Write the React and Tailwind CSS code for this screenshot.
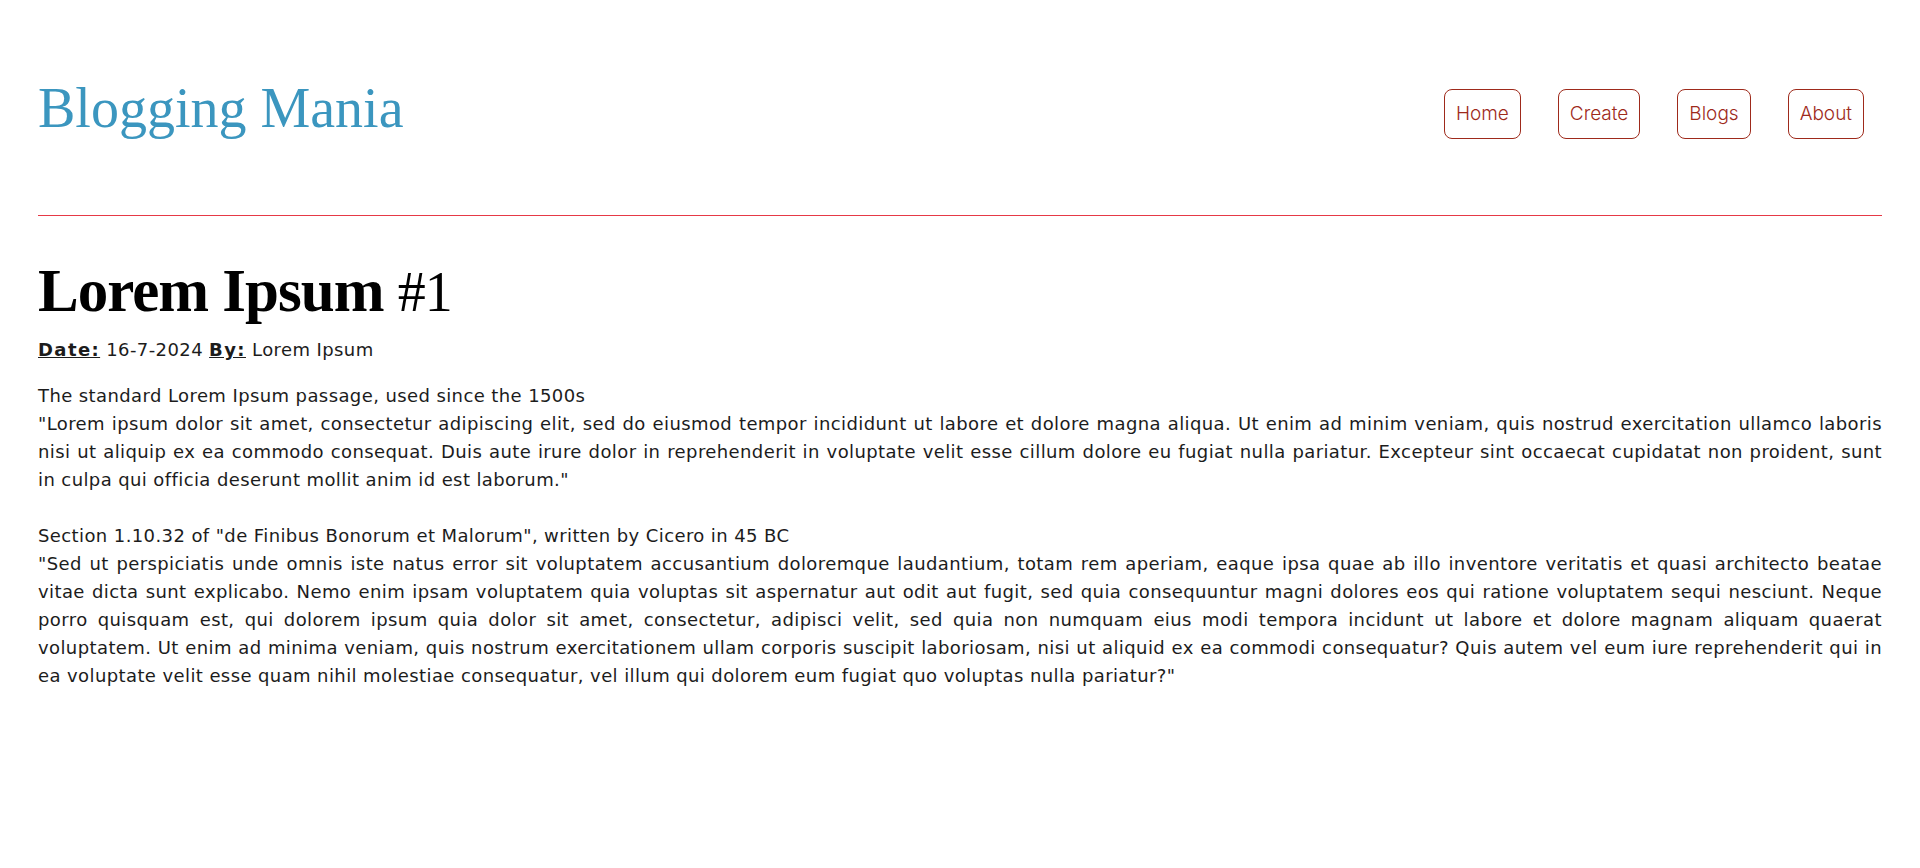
import React from 'react'

const navLinks = ['Home', 'Create', 'Blogs', 'About']

const BlogPage = () => {
  return (
    <div className="min-h-screen bg-white px-[38px]">
      {/* Header */}
      <header className="flex items-start justify-between pt-[77px]">
        <h1 className="text-[56px] leading-[62px] text-[#3b96bf] font-normal font-['Liberation_Serif',serif]">
          Blogging Mania
        </h1>
        <nav className="mt-[12px] mr-[18px] flex items-center gap-[37px]">
          {navLinks.map(link => (
            <a
              key={link}
              href="#"
              className="rounded-lg border border-[#9e2a1b] px-[11px] py-[12px] text-[19px] leading-[24px] font-light text-[#9e2a1b] font-['Inter',sans-serif]"
            >
              {link}
            </a>
          ))}
        </nav>
      </header>

      <hr className="mt-[76px] border-0 border-t border-[#e63946]" />

      {/* Post */}
      <article className="text-[18px] leading-[28px] tracking-[0.4px] text-[#1c1c1c] font-['DejaVu_Sans',sans-serif]">
        <h2 className="mt-[40px] text-[61px] leading-[69px] tracking-[-1px] font-bold text-black font-['Liberation_Serif',serif]">
          Lorem Ipsum <span className="font-normal text-[56px]">#1</span>
        </h2>
        <p className="mt-[9px]">
          <b className="underline tracking-[1.4px]">Date:</b> 16-7-2024 <b className="underline tracking-[1.4px]">By:</b> Lorem Ipsum
        </p>

        <div className="mt-[18px] text-justify">
          <p>The standard Lorem Ipsum passage, used since the 1500s</p>
          <p>
            "Lorem ipsum dolor sit amet, consectetur adipiscing elit, sed do eiusmod tempor incididunt ut labore et dolore magna aliqua. Ut enim ad minim veniam, quis nostrud exercitation ullamco laboris nisi ut aliquip ex ea commodo consequat. Duis aute irure dolor in reprehenderit in voluptate velit esse cillum dolore eu fugiat nulla pariatur. Excepteur sint occaecat cupidatat non proident, sunt in culpa qui officia deserunt mollit anim id est laborum."
          </p>
          <p className="mt-[28px]">Section 1.10.32 of "de Finibus Bonorum et Malorum", written by Cicero in 45 BC</p>
          <p>
            "Sed ut perspiciatis unde omnis iste natus error sit voluptatem accusantium doloremque laudantium, totam rem aperiam, eaque ipsa quae ab illo inventore veritatis et quasi architecto beatae vitae dicta sunt explicabo. Nemo enim ipsam voluptatem quia voluptas sit aspernatur aut odit aut fugit, sed quia consequuntur magni dolores eos qui ratione voluptatem sequi nesciunt. Neque porro quisquam est, qui dolorem ipsum quia dolor sit amet, consectetur, adipisci velit, sed quia non numquam eius modi tempora incidunt ut labore et dolore magnam aliquam quaerat voluptatem. Ut enim ad minima veniam, quis nostrum exercitationem ullam corporis suscipit laboriosam, nisi ut aliquid ex ea commodi consequatur? Quis autem vel eum iure reprehenderit qui in ea voluptate velit esse quam nihil molestiae consequatur, vel illum qui dolorem eum fugiat quo voluptas nulla pariatur?"
          </p>
        </div>
      </article>
    </div>
  )
}

export default function App() {
  return <BlogPage />
}
